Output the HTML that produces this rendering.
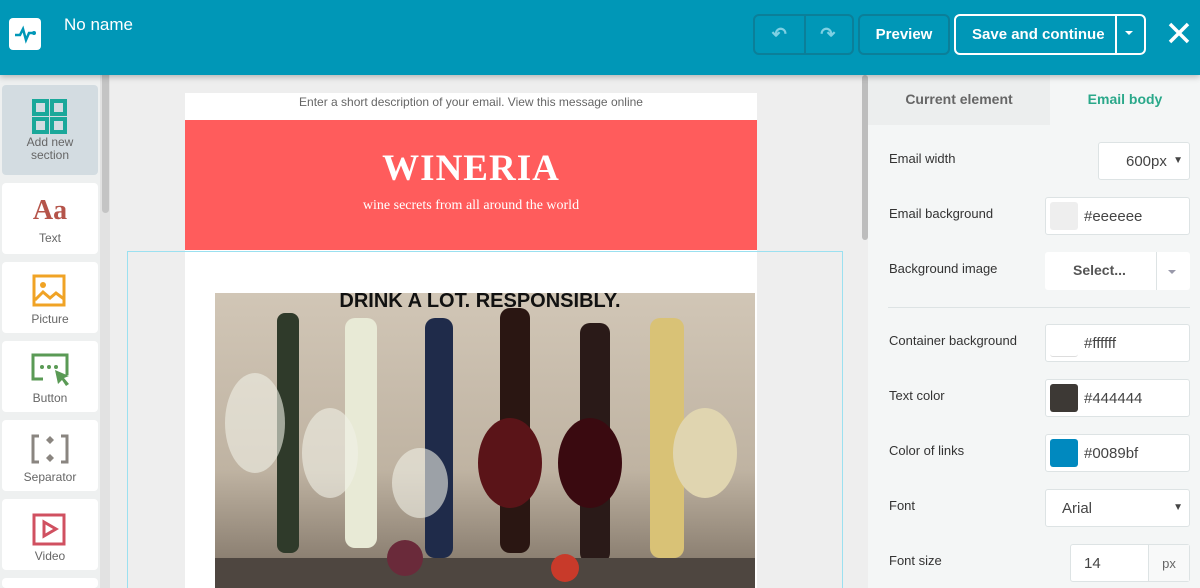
<!DOCTYPE html>
<html style="width:1200px;height:588px;overflow:hidden"><head><style>
*{box-sizing:border-box;margin:0;padding:0}
body{width:1200px;height:588px;overflow:hidden;font-family:"Liberation Sans",sans-serif;background:#eee;position:relative}
.hdr{position:absolute;left:0;top:0;width:1200px;height:75px;background:#0097b7;box-shadow:0 2px 6px rgba(0,0,0,.25);z-index:5}
.logo{position:absolute;left:9px;top:18px;width:32px;height:32px;background:#fff;border-radius:4px}
.title{position:absolute;left:64px;top:15px;color:#fff;font-size:17px}
.btn{position:absolute;top:14px;height:41px;border:2px solid #0b7f99;border-radius:6px;color:#fff;font-weight:bold;font-size:15px;display:flex;align-items:center;justify-content:center}
.side{position:absolute;left:0;top:75px;width:100px;height:513px;background:#eef0f0;overflow:hidden}
.sb{position:absolute;left:100px;top:75px;width:10px;height:513px;background:#e2e2e2}
.sb div{position:absolute;left:2px;top:0;width:7px;height:138px;background:#c4c4c4;border-radius:0 0 4px 4px}
.tool{position:absolute;left:2px;width:96px;height:71px;background:#fff;border-radius:4px;text-align:center;font-size:12px;color:#666}
.tool span{position:absolute;left:0;right:0;top:52px}
.tool svg{position:absolute;left:28px;top:12px}
.panel{position:absolute;left:868px;top:75px;width:332px;height:513px;background:#f4f6f6}
.lbl{position:absolute;left:889px;font-size:13px;color:#333}
.inp{position:absolute;left:1045px;width:145px;height:38px;background:#fff;border:1px solid #dde3e4;border-radius:3px;font-size:15px;color:#444}
.sw{position:absolute;left:4px;top:4px;width:28px;height:28px;border-radius:3px}
.inp b{position:absolute;left:38px;top:10px;font-weight:normal}
</style></head><body>
<div class="hdr">
 <div class="logo"><svg width="32" height="32"><path d="M6 17h5l3-6 3 11 3-7h5" stroke="#0097b7" stroke-width="2.5" fill="none"/><circle cx="25" cy="15" r="2" fill="#0097b7"/></svg></div>
 <div class="title">No name</div>
 <div class="btn" style="left:753px;width:101px;justify-content:space-around;color:#7fd0e3">
  <span style="font-size:18px">&#8630;</span><span style="position:absolute;left:49px;top:0;bottom:0;border-left:2px solid #0b7f99"></span><span style="font-size:18px">&#8631;</span></div>
 <div class="btn" style="left:858px;width:92px">Preview</div>
 <div class="btn" style="left:954px;width:192px;border-color:#fff;justify-content:flex-start;padding-left:16px">Save and continue<span style="position:absolute;left:159px;top:0;bottom:0;border-left:2px solid #fff"></span><span style="position:absolute;left:169px;top:15px;border:4px solid transparent;border-top-color:#fff"></span></div>
 <svg style="position:absolute;left:1167px;top:21px" width="24" height="24"><path d="M3 3L21 21M21 3L3 21" stroke="#fff" stroke-width="3.5"/></svg>
</div>
<div class="side">
 <div class="tool" style="top:10px;height:90px;background:#d3dce1"><svg width="40" height="36" style="left:29px;top:14px"><g fill="none" stroke="#1aa89a" stroke-width="4"><rect x="3" y="2" width="13" height="13"/><rect x="21" y="2" width="13" height="13"/><rect x="3" y="20" width="13" height="13"/><rect x="21" y="20" width="13" height="13"/></g></svg><span style="top:51px;line-height:13px">Add new<br>section</span></div>
 <div class="tool" style="top:108px"><div style="position:absolute;left:0;right:0;top:12px;font:bold 28px 'Liberation Serif',serif;color:#b5544a">Aa</div><span style="top:48px">Text</span></div>
 <div class="tool" style="top:187px"><svg width="40" height="40" style="left:30px;top:12px"><rect x="2" y="2" width="30" height="29" fill="none" stroke="#f0a325" stroke-width="3"/><circle cx="11" cy="11" r="3" fill="#f0a325"/><path d="M3 26l8-8 7 6 6-5 8 6" stroke="#f0a325" stroke-width="3" fill="none"/></svg><span style="top:50px">Picture</span></div>
 <div class="tool" style="top:266px"><svg width="44" height="40" style="left:29px;top:12px"><path d="M12 26H2V2h34v20" fill="none" stroke="#5a9a55" stroke-width="3"/><circle cx="11" cy="14" r="2" fill="#5a9a55"/><circle cx="18" cy="14" r="2" fill="#5a9a55"/><circle cx="25" cy="14" r="2" fill="#5a9a55"/><path d="M24 17l14 6-5 2 5 6-3 2-4-6-4 4z" fill="#5a9a55"/></svg><span style="top:50px">Button</span></div>
 <div class="tool" style="top:345px"><svg width="40" height="36" style="left:29px;top:14px"><path d="M8 2H2v26h6M30 2h6v26h-6" fill="none" stroke="#8a8580" stroke-width="3"/><path d="M19 2l4 4-4 4-4-4zM19 20l4 4-4 4-4-4z" fill="#8a8580"/></svg><span style="top:50px">Separator</span></div>
 <div class="tool" style="top:424px"><svg width="40" height="36" style="left:30px;top:14px"><rect x="2" y="2" width="30" height="29" fill="none" stroke="#d05060" stroke-width="3"/><path d="M12 9l12 7-12 7z" fill="none" stroke="#d05060" stroke-width="3"/></svg><span style="top:50px">Video</span></div>
 <div class="tool" style="top:503px;height:10px"></div>
</div>
<div class="sb"><div></div></div>
<div style="position:absolute;left:862px;top:75px;width:6px;height:165px;background:#bdbdbd;border-radius:3px"></div>
<div style="position:absolute;left:185px;top:93px;width:572px;height:27px;background:#fff;text-align:center;font-size:12px;color:#666;padding-top:2px">Enter a short description of your email. View this message online</div>
<div style="position:absolute;left:185px;top:120px;width:572px;height:130px;background:#ff5c5c;text-align:center;color:#fff;font-family:'Liberation Serif',serif">
 <div style="font-size:37px;font-weight:bold;margin-top:27px;letter-spacing:1px">WINERIA</div>
 <div style="font-size:14px;margin-top:8px">wine secrets from all around the world</div></div>
<div style="position:absolute;left:185px;top:250px;width:572px;height:338px;background:#fff"></div>
<div style="position:absolute;left:127px;top:251px;width:716px;height:337px;border:1px solid #9be0f0;border-bottom:none"></div>
<div style="position:absolute;left:215px;top:293px;width:540px;height:295px;background:linear-gradient(#d1c6b6,#bfb3a2 60%,#7b6f62);overflow:hidden">
 <svg width="540" height="295">
  <g fill="#2f3a2a"><rect x="62" y="20" width="22" height="240" rx="8"/><rect x="130" y="25" width="32" height="230" rx="10" fill="#e8ead6"/><rect x="210" y="25" width="28" height="240" rx="10" fill="#1f2b4a"/><rect x="285" y="15" width="30" height="245" rx="10" fill="#2a1612"/><rect x="365" y="30" width="30" height="240" rx="10" fill="#2a1a18"/><rect x="435" y="25" width="34" height="240" rx="10" fill="#d9c276"/></g>
  <g fill="rgba(240,240,230,.6)"><ellipse cx="40" cy="130" rx="30" ry="50"/><ellipse cx="115" cy="160" rx="28" ry="45"/><ellipse cx="205" cy="190" rx="28" ry="35"/><ellipse cx="295" cy="170" rx="32" ry="45" fill="#5a1418"/><ellipse cx="375" cy="170" rx="32" ry="45" fill="#3a0a10"/><ellipse cx="490" cy="160" rx="32" ry="45" fill="#e0d5b0"/></g>
  <rect x="0" y="265" width="540" height="30" fill="#4e4640"/>
  <circle cx="190" cy="265" r="18" fill="#6a2a3a"/><circle cx="350" cy="275" r="14" fill="#c83a2a"/>
 </svg>
</div>
<div style="position:absolute;left:215px;top:290px;width:530px;text-align:center;font-weight:bold;font-size:20px;color:#111">DRINK A LOT. RESPONSIBLY.</div>
<div class="panel">
 <div style="position:absolute;left:0;top:0;width:182px;height:50px;background:#eceeee;color:#666;font-size:14px;font-weight:bold;text-align:center;padding-top:16px">Current element</div>
 <div style="position:absolute;left:182px;top:0;width:150px;height:50px;color:#2aa88a;font-size:14px;font-weight:bold;text-align:center;padding-top:16px">Email body</div>
 <div style="position:absolute;left:20px;top:232px;width:302px;border-top:1px solid #dde3e4"></div>
</div>
<div class="lbl" style="top:151px">Email width</div>
<div class="inp" style="left:1098px;top:142px;width:92px"><b style="left:27px">600px</b><span style="position:absolute;right:6px;top:12px;font-size:10px">&#9660;</span></div>
<div class="lbl" style="top:206px">Email background</div>
<div class="inp" style="top:197px"><div class="sw" style="background:#eee"></div><b>#eeeeee</b></div>
<div class="lbl" style="top:261px">Background image</div>
<div class="inp" style="top:252px;border:none"><b style="left:28px;font-weight:bold;color:#555;font-size:14px">Select...</b><span style="position:absolute;left:111px;top:0;bottom:0;border-left:1px solid #dde3e4"></span><span style="position:absolute;left:123px;top:18px;border:4px solid transparent;border-top-color:#99a"></span></div>
<div class="lbl" style="top:333px">Container background</div>
<div class="inp" style="top:324px"><div class="sw" style="border-bottom:1px solid #ddd"></div><b>#ffffff</b></div>
<div class="lbl" style="top:388px">Text color</div>
<div class="inp" style="top:379px"><div class="sw" style="background:#3d3935"></div><b>#444444</b></div>
<div class="lbl" style="top:443px">Color of links</div>
<div class="inp" style="top:434px"><div class="sw" style="background:#0089bf"></div><b>#0089bf</b></div>
<div class="lbl" style="top:498px">Font</div>
<div class="inp" style="top:489px"><b style="left:16px">Arial</b><span style="position:absolute;right:6px;top:12px;font-size:10px">&#9660;</span></div>
<div class="lbl" style="top:553px">Font size</div>
<div class="inp" style="left:1070px;top:544px;width:120px;height:38px"><b style="left:13px">14</b><span style="position:absolute;left:77px;top:0;bottom:0;width:41px;border-left:1px solid #dde3e4;background:#f8f9f9;font-size:13px;color:#666;text-align:center;padding-top:11px">px</span></div>
</body></html>
